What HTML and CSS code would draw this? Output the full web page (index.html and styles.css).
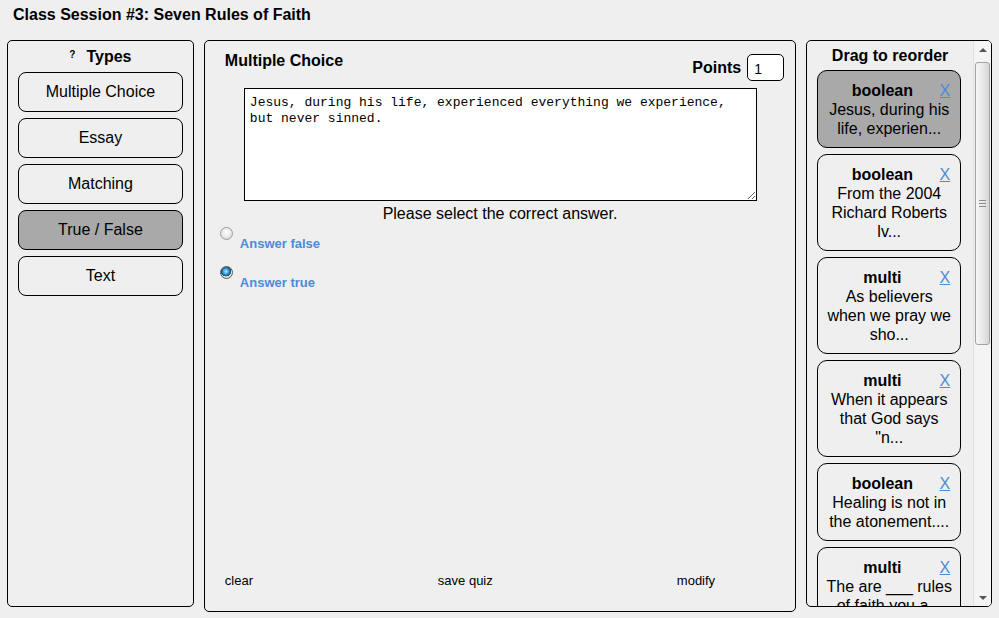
FILE: index.html
```html
<!DOCTYPE html>
<html>
<head>
<meta charset="utf-8">
<title>Class Session #3: Seven Rules of Faith</title>
<link rel="stylesheet" href="styles.css">
</head>
<body>
<div class="page">
  <h1 class="title">Class Session #3: Seven Rules of Faith</h1>
  <div class="panels">
    <section class="panel types">
      <div class="types-head"><span class="help">?</span><span>Types</span></div>
      <div class="type-btn">Multiple Choice</div>
      <div class="type-btn">Essay</div>
      <div class="type-btn">Matching</div>
      <div class="type-btn active">True / False</div>
      <div class="type-btn">Text</div>
    </section>

    <section class="panel editor">
      <div class="editor-head">
        <div class="editor-title">Multiple Choice</div>
        <div class="points"><span class="points-label">Points</span><input class="points-input" type="text" value="1"></div>
      </div>
      <textarea class="question">Jesus, during his life, experienced everything we experience, but never sinned.</textarea>
      <div class="prompt">Please select the correct answer.</div>
      <div class="options">
        <div class="option"><span class="radio"></span><span class="opt-label">Answer false</span></div>
        <div class="option"><span class="radio checked"></span><span class="opt-label">Answer true</span></div>
      </div>
      <div class="actions">
        <span class="action">clear</span>
        <span class="action">save quiz</span>
        <span class="action">modify</span>
      </div>
    </section>

    <section class="panel order">
      <div class="order-list">
        <div class="order-head">Drag to reorder</div>
        <div class="card active"><a class="remove">X</a><div class="card-type">boolean</div><div class="card-text">Jesus, during his life, experien...</div></div>
        <div class="card"><a class="remove">X</a><div class="card-type">boolean</div><div class="card-text">From the 2004 Richard Roberts lv...</div></div>
        <div class="card"><a class="remove">X</a><div class="card-type">multi</div><div class="card-text">As believers when we pray we sho...</div></div>
        <div class="card"><a class="remove">X</a><div class="card-type">multi</div><div class="card-text">When it appears that God says "n...</div></div>
        <div class="card"><a class="remove">X</a><div class="card-type">boolean</div><div class="card-text">Healing is not in the atonement....</div></div>
        <div class="card"><a class="remove">X</a><div class="card-type">multi</div><div class="card-text">The are ___ rules of faith you a...</div></div>
      </div>
      <div class="scrollbar">
        <div class="sb-btn"><span class="arrow-up"></span></div>
        <div class="sb-track"><div class="sb-thumb"><span class="grip"></span></div></div>
        <div class="sb-btn"><span class="arrow-down"></span></div>
      </div>
    </section>
  </div>
</div>
</body>
</html>
```

FILE: styles.css
```css
html, body {
  margin: 0;
  padding: 0;
  background: #efefef;
  font-family: "Liberation Sans", Arial, sans-serif;
  color: #000;
}

.page {
  padding: 0 7px;
  width: 999px;
  height: 618px;
  box-sizing: border-box;
  overflow: hidden;
}

.title {
  margin: 0;
  padding: 6px 0 0 6px;
  height: 40px;
  box-sizing: border-box;
  font-size: 16px;
  line-height: 18px;
  font-weight: bold;
}

.panels {
  display: flex;
  align-items: flex-start;
  gap: 10px;
}

.panel {
  border: 1px solid #000;
  border-radius: 5px;
  box-sizing: border-box;
  background: #efefef;
}

/* Types panel */
.types {
  width: 187px;
  height: 567px;
  padding: 4px 10px;
}

.types-head {
  text-align: center;
  font-weight: bold;
  font-size: 16px;
  line-height: 19px;
  margin-bottom: 6px;
}

.help {
  font-size: 10px;
  vertical-align: 4px;
  margin-right: 11px;
}

.type-btn {
  height: 40px;
  box-sizing: border-box;
  border: 1px solid #000;
  border-radius: 8px;
  display: flex;
  align-items: center;
  justify-content: center;
  font-size: 16px;
  margin-bottom: 6px;
  background: #efefef;
}

.type-btn.active {
  background: #a9a9a9;
}

/* Editor panel */
.editor {
  width: 593px;
  height: 572px;
  padding-top: 10px;
  display: flex;
  flex-direction: column;
}

.editor-head {
  display: flex;
  justify-content: space-between;
  align-items: flex-start;
  padding: 0 11px 0 20px;
}

.editor-title {
  font-weight: bold;
  font-size: 16px;
  line-height: 19px;
}

.points {
  display: flex;
  align-items: center;
  gap: 6px;
  margin-top: 3px;
}

.points-label {
  font-weight: bold;
  font-size: 16px;
  line-height: 19px;
  margin-top: -1px;
}

.points-input {
  width: 37px;
  height: 27px;
  box-sizing: border-box;
  border: 1px solid #000;
  border-radius: 5px;
  background: #fff;
  font-family: "Liberation Sans", Arial, sans-serif;
  font-size: 14px;
  padding: 2px 0 0 6px;
  margin: 0;
  outline: none;
}

.question {
  display: block;
  margin: 7px 0 0 39px;
  width: 513px;
  height: 113px;
  box-sizing: border-box;
  border: 1px solid #000;
  padding: 6px 5px 5px;
  font-family: "Liberation Mono", "Courier New", monospace;
  font-size: 13px;
  line-height: 16px;
  background: #fff;
  color: #000;
  outline: none;
}

.prompt {
  text-align: center;
  font-size: 16px;
  line-height: 19px;
  margin-top: 3px;
}

.options {
  padding-left: 15px;
  margin-top: 4px;
}

.option {
  display: flex;
  align-items: flex-start;
  margin-bottom: 15px;
}

.radio {
  width: 13px;
  height: 13px;
  box-sizing: border-box;
  border-radius: 50%;
  border: 1px solid #9c9c9c;
  background: radial-gradient(circle at 50% 40%, #ffffff 0%, #e8e8e8 55%, #c9c9c9 100%);
  flex: none;
}

.radio.checked {
  border-color: #5a5a5a;
  background:
    radial-gradient(circle at 45% 40%, #bfe9ff 0%, #3aa0d8 30%, #0b4a78 55%, transparent 58%),
    radial-gradient(circle, #ffffff 0%, #d0d0d0 100%);
}

.opt-label {
  margin-left: 7px;
  padding-top: 9px;
  font-weight: bold;
  font-size: 13px;
  line-height: 15px;
  color: #4a8cd6;
}

.actions {
  margin-top: auto;
  padding: 0 0 23px 20px;
  display: grid;
  grid-template-columns: 213px 239px auto;
  font-size: 13px;
  line-height: 15px;
}

/* Order panel */
.order {
  width: 186px;
  height: 567px;
  display: flex;
  overflow: hidden;
}

.order-list {
  flex: 1;
  overflow: hidden;
  padding: 5px 0 0 10px;
}

.order-head {
  font-weight: bold;
  font-size: 16px;
  line-height: 19px;
  text-align: center;
  margin: 0 0 5px -10px;
}

.card {
  width: 144px;
  box-sizing: border-box;
  border: 1px solid #000;
  border-radius: 10px;
  padding: 10px 7px 9px;
  margin-bottom: 6px;
  text-align: center;
  font-size: 16px;
  line-height: 19px;
  background: #efefef;
}

.card.active {
  background: #a9a9a9;
}

.remove {
  float: right;
  color: #4a8cd6;
  text-decoration: underline;
  margin-right: 3px;
  cursor: pointer;
}

.card-type {
  font-weight: bold;
}

/* Scrollbar */
.scrollbar {
  width: 17px;
  flex: none;
  display: flex;
  flex-direction: column;
  background: #f4f4f4;
  border-left: 1px solid #e2e2e2;
}

.sb-btn {
  height: 17px;
  display: flex;
  align-items: center;
  justify-content: center;
}

.arrow-up {
  width: 0;
  height: 0;
  border-left: 4px solid transparent;
  border-right: 4px solid transparent;
  border-bottom: 4px solid #555;
}

.arrow-down {
  width: 0;
  height: 0;
  border-left: 4px solid transparent;
  border-right: 4px solid transparent;
  border-top: 4px solid #555;
}

.sb-track {
  flex: 1;
  padding-top: 4px;
}

.sb-thumb {
  height: 283px;
  margin: 0 1px;
  box-sizing: border-box;
  border: 1px solid #a2a2a2;
  border-radius: 3px;
  background: linear-gradient(to right, #f7f7f7 0%, #e9e9e9 50%, #d6d6d6 100%);
  display: flex;
  align-items: center;
  justify-content: center;
}

.grip {
  width: 7px;
  height: 7px;
  background: repeating-linear-gradient(to bottom, #8a8a8a 0 1px, transparent 1px 3px);
}
```
